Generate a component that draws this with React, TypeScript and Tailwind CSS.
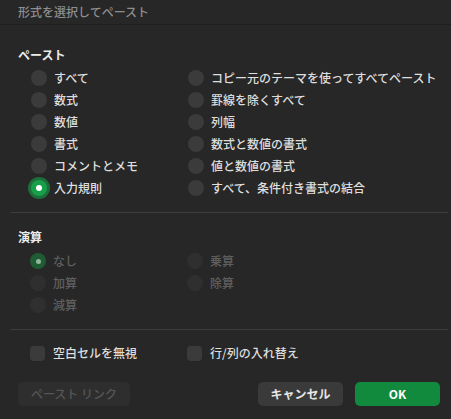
const pasteLeft = ["すべて", "数式", "数値", "書式", "コメントとメモ", "入力規則"];
const pasteRight = [
  "コピー元のテーマを使ってすべてペースト",
  "罫線を除くすべて",
  "列幅",
  "数式と数値の書式",
  "値と数値の書式",
  "すべて、条件付き書式の結合",
];

function Radio({ label, checked, disabled }: { label: string; checked?: boolean; disabled?: boolean }) {
  return (
    <div className="flex items-center h-[22px]">
      <div className="w-[16px] h-[16px] flex items-center justify-center">
        {checked ? (
          disabled ? (
            <div className="w-[16px] h-[16px] rounded-full bg-[#1f5c33] flex items-center justify-center">
              <div className="w-[5px] h-[5px] rounded-full bg-[#93b59c]" />
            </div>
          ) : (
            <div className="w-[22px] h-[22px] shrink-0 rounded-full bg-[#1d6e3a] flex items-center justify-center">
              <div className="w-[16px] h-[16px] rounded-full bg-[#17a049] flex items-center justify-center">
                <div className="w-[6px] h-[6px] rounded-full bg-white" />
              </div>
            </div>
          )
        ) : (
          <div className={`w-[16px] h-[16px] rounded-full ${disabled ? "bg-[#2f2f2f]" : "bg-[#3b3b3b]"}`} />
        )}
      </div>
      <span className={`ml-[7px] text-[12px] font-medium ${disabled ? "text-[#5f5f5f]" : "text-[#dedede]"}`}>
        {label}
      </span>
    </div>
  );
}

function Check({ label }: { label: string }) {
  return (
    <div className="flex items-center h-[22px]">
      <div className="w-[15px] h-[15px] rounded-[4px] bg-[#3b3b3b]" />
      <span className="ml-[8px] text-[12px] font-medium text-[#dedede]">{label}</span>
    </div>
  );
}

export default function App() {
  return (
    <div
      className="w-[451px] h-[419px] bg-[#272727] flex flex-col overflow-hidden"
      style={{ fontFamily: '"Noto Sans CJK JP", "Noto Sans", sans-serif' }}
    >
      <div className="h-[25px] shrink-0 border-b border-[#1f1f1f] pl-[18px] flex items-center text-[12px] font-medium text-[#8e8e8e]">
        形式を選択してペースト
      </div>

      <div className="mt-[21px] pl-[18px] h-[18px] flex items-center text-[12px] font-bold text-[#ececec]">ペースト</div>
      <div className="mt-[3px] pl-[31px] grid grid-cols-[157px_1fr]">
        <div className="flex flex-col">
          {pasteLeft.map((l, i) => (
            <Radio key={l} label={l} checked={i === 5} />
          ))}
        </div>
        <div className="flex flex-col">
          {pasteRight.map((l) => (
            <Radio key={l} label={l} />
          ))}
        </div>
      </div>

      <div className="mt-[13px] ml-[10px] mr-[3px] h-px bg-[#3c3c3c]" />

      <div className="mt-[15px] pl-[18px] h-[18px] flex items-center text-[12px] font-bold text-[#ececec]">演算</div>
      <div className="mt-[4px] pl-[30px] grid grid-cols-[157px_1fr]">
        <div className="flex flex-col">
          <Radio label="なし" checked disabled />
          <Radio label="加算" disabled />
          <Radio label="減算" disabled />
        </div>
        <div className="flex flex-col">
          <Radio label="乗算" disabled />
          <Radio label="除算" disabled />
        </div>
      </div>

      <div className="mt-[13px] ml-[10px] mr-[3px] h-px bg-[#3c3c3c]" />

      <div className="mt-[12px] pl-[30px] grid grid-cols-[157px_1fr]">
        <Check label="空白セルを無視" />
        <Check label="行/列の入れ替え" />
      </div>

      <div className="mt-[18px] px-[18px] mr-[-7px] flex items-center">
        <button className="w-[112px] h-[24px] rounded-[5px] bg-[#2e2e2e] text-[12px] font-medium text-[#565656]">
          ペースト リンク
        </button>
        <div className="flex-1" />
        <button className="w-[85px] h-[24px] rounded-[5px] bg-[#3a3a3a] text-[12px] font-bold text-[#e6e6e6]">
          キャンセル
        </button>
        <button className="ml-[12px] w-[85px] h-[24px] rounded-[5px] bg-[#128a3e] text-[12px] font-bold text-white">
          OK
        </button>
      </div>
    </div>
  );
}
